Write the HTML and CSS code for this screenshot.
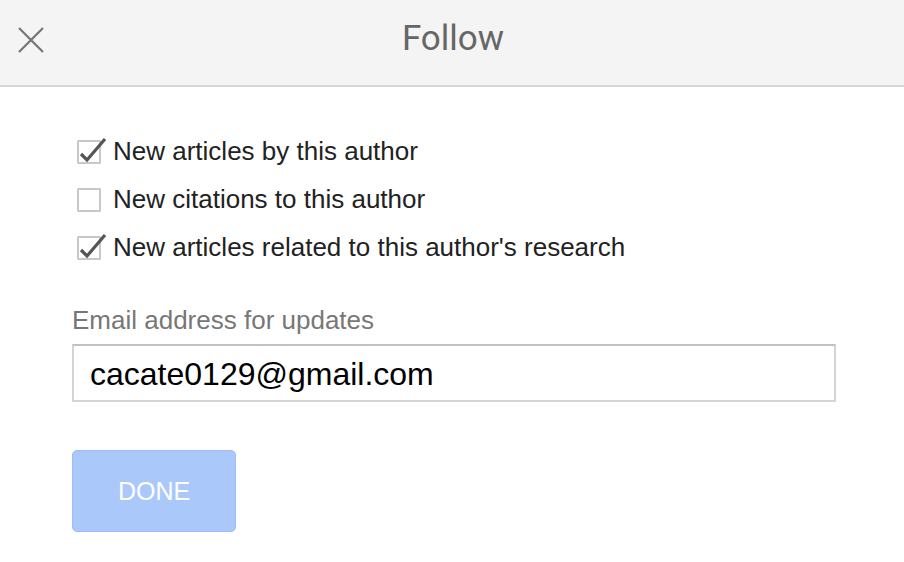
FILE: index.html
```html
<!DOCTYPE html>
<html>
<head>
<meta charset="utf-8">
<link rel="stylesheet" href="styles.css">
</head>
<body>
<div class="header">
  <div class="close">
    <svg width="26" height="26" viewBox="0 0 26 26"><path d="M1 1 L25 25 M25 1 L1 25" stroke="#757575" stroke-width="2.2" fill="none"/></svg>
  </div>
  <div class="title">Follow</div>
  <div></div>
</div>
<div class="content">
  <div class="row">
    <span class="box checked"><svg class="tick" width="30" height="26" viewBox="0 0 30 26"><path d="M4 16 L10 22 L28 1" stroke="#555" stroke-width="3.2" fill="none"/></svg></span>
    <span class="label">New articles by this author</span>
  </div>
  <div class="row">
    <span class="box"></span>
    <span class="label">New citations to this author</span>
  </div>
  <div class="row">
    <span class="box checked"><svg class="tick" width="30" height="26" viewBox="0 0 30 26"><path d="M4 16 L10 22 L28 1" stroke="#555" stroke-width="3.2" fill="none"/></svg></span>
    <span class="label">New articles related to this author's research</span>
  </div>
  <div class="field-label">Email address for updates</div>
  <input class="email" type="text" value="cacate0129@gmail.com">
  <button class="done">DONE</button>
</div>
</body>
</html>
```
FILE: styles.css
```css
html, body {
  margin: 0;
  padding: 0;
  background: #fff;
  font-family: "Liberation Sans", Arial, sans-serif;
}
.header {
  height: 85px;
  background: #f4f4f4;
  border-bottom: 2px solid #d6d6d6;
  display: grid;
  grid-template-columns: 1fr auto 1fr;
  align-items: center;
}
.close {
  padding-left: 18px;
  display: flex;
  align-items: center;
  height: 26px;
  margin-top: -5px;
}
.title {
  font-family: Roboto, sans-serif;
  font-size: 35px;
  color: #666;
  margin-top: -9px;
  padding-left: 2px;
}
.content {
  padding: 40px 0 0 72px;
}
.row {
  height: 48px;
  display: flex;
  align-items: center;
  padding-left: 5px;
}
.box {
  position: relative;
  width: 20px;
  height: 20px;
  border: 2px solid #c8c8c8;
  border-radius: 1px;
  margin-right: 12px;
  margin-top: 2px;
}
.tick {
  position: absolute;
  left: -2px;
  top: -4px;
  overflow: visible;
}
.label {
  font-size: 26px;
  color: #222;
}
.field-label {
  margin-top: 34px;
  font-size: 26px;
  line-height: 30px;
  color: #777;
}
.email {
  display: block;
  box-sizing: border-box;
  margin-top: 9px;
  width: 764px;
  height: 58px;
  border: 2px solid #d4d4d4;
  border-top-color: #c2c2c2;
  padding: 3px 0 0 16px;
  font-family: "Liberation Sans", Arial, sans-serif;
  font-size: 32px;
  color: #000;
  outline: none;
}
.done {
  display: block;
  margin-top: 48px;
  width: 164px;
  height: 82px;
  background: #abc8fb;
  border: 1px solid #9fbdf4;
  border-radius: 5px;
  color: #fff;
  font-family: "Liberation Sans", Arial, sans-serif;
  font-size: 25px;
}
```
